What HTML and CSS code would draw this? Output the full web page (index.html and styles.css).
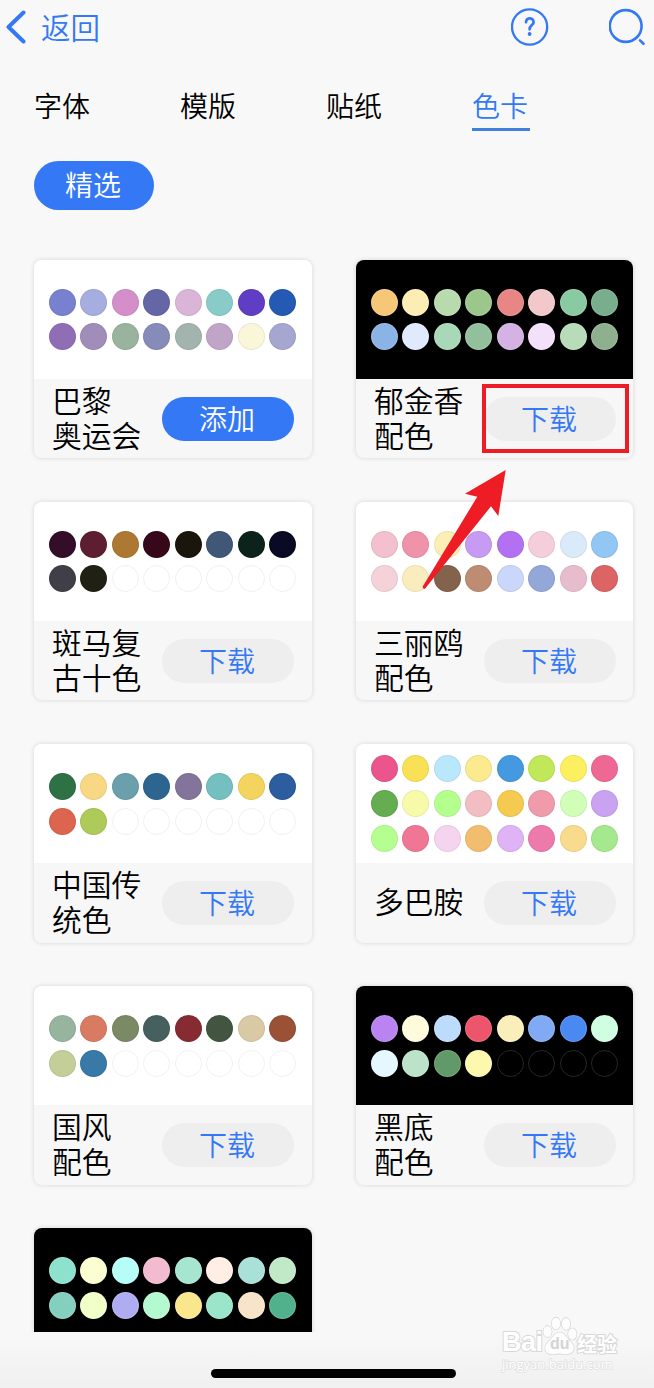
FILE: index.html
```html
<!DOCTYPE html>
<html lang="zh-CN">
<head>
    <meta charset="UTF-8">
    <meta name="viewport" content="width=device-width, initial-scale=1.0">
    <title>色卡</title>
    <link rel="stylesheet" href="styles.css">
</head>
<body>
    <div class="page">
        <header class="header">
            <a class="back">
                <svg width="20" height="34" viewBox="0 0 20 34"><path d="M17.5 2.5 L2.5 17 L17.5 31.5"/></svg>
                <span>返回</span>
            </a>
            <div class="actions">
                <svg width="38" height="38" viewBox="0 0 38 38">
                    <circle cx="18.6" cy="19" r="17.6" stroke-width="2.3"/>
                    <path stroke-width="2.7" d="M15 14.2 C15 9 22.6 9 22.6 14.2 C22.6 17 18.6 17.2 18.6 21.3"/>
                    <circle class="dot" cx="18.6" cy="26" r="1.9"/>
                </svg>
                <svg width="38" height="38" viewBox="0 0 38 38">
                    <circle cx="16.7" cy="18" r="15.9" stroke-width="2.6"/>
                    <path stroke-width="2.6" d="M31 32.4 L34.5 35.8"/>
                </svg>
            </div>
        </header>

        <nav class="tabs">
            <a class="tab">字体</a>
            <a class="tab">模版</a>
            <a class="tab">贴纸</a>
            <a class="tab active">色卡</a>
        </nav>

        <button class="filter">精选</button>

        <main class="list">
            <div class="grid" id="grid"></div>
        </main>

        <footer class="bottom">
            <div class="home-bar"></div>
        </footer>

        <div class="highlight"></div>
        <svg class="arrow" width="86" height="122" viewBox="0 0 86 122">
            <path d="M84.7 1 L44 24.7 L56.3 27.7 L1.7 117.5 Q1.6 120.5 4.2 119.5 L70 37.3 L77.3 47 Z"/>
        </svg>

        <div class="watermark">
            <div class="brand">
                <span class="bai">Bai</span>
                <span class="paw">
                    <svg width="36" height="40" viewBox="0 0 36 40">
                        <ellipse cx="6.5" cy="15.5" rx="4.2" ry="5.5"/>
                        <ellipse cx="15" cy="7.5" rx="4.3" ry="6"/>
                        <ellipse cx="25" cy="8" rx="4.3" ry="6"/>
                        <ellipse cx="31.3" cy="18" rx="4.2" ry="5.7"/>
                        <path d="M18.5 16.5 C22.5 16.5 24 19 27 23 C31 27 34 29 32.5 34 C30.5 39 25 38.5 18.5 37.5 C11 38.5 6 39 4.5 34 C3 29 7 26 10 23 C13 19 14.5 16.5 18.5 16.5 Z"/>
                    </svg>
                    <b>du</b>
                </span>
                <span class="jy">经验</span>
            </div>
            <div class="site">jingyan.baidu.com</div>
        </div>
    </div>

    <script>
        // empty: 末尾未填充的空圆数量
        const cards = [
            { name: '巴黎<br>奥运会', added: true, colors: '7881cf a6addf d48fcb 6566a5 dab5d8 88cbc9 5f3dc4 245ab4 8f6eb6 a08db9 98b49f 878bb9 a3b3ad c1a5c8 f9f6da a6a7d0' },
            { name: '郁金香<br>配色', dark: true, colors: 'f6c777 fcedb5 b8dbad 9bc78c e88585 f2c8ca 8acaa3 78ae8d 8bb4e6 e0eafc a9d8b8 92c09c d4b2e3 f3e1f9 b8dbb8 8fb08f' },
            { name: '斑马复<br>古十色', colors: '340d28 5e1e31 ad7832 37081a 1a160d 405777 0c231b 0b0a24 403f48 202114', empty: 6 },
            { name: '三丽鸥<br>配色', colors: 'f4c0d0 f092a9 fbefb5 c79bf3 b370f3 f5cedb dbeafa 92c6f4 f5d2da faedbd 83634b bd8c72 cad7fa 93a8d9 e7bdcd dc6465' },
            { name: '中国传<br>统色', colors: '2e7145 f8d884 6b9fac 2d6591 82749a 74bfc0 f2d45e 2b5d9f dd644e aeca58', empty: 6 },
            { name: '多巴胺', colors: 'eb558c f9e157 b9e8fc fbea8e 4499e0 c0e859 fcf060 ef6894 66ad51 f7fba9 b5ff8f f2bec3 f4cb50 f09bab d1ffb7 c9a3f2 b5ff91 ef7694 f5d4f0 f3bd70 deb4f6 ec7bac f8db8c a4e98e' },
            { name: '国风<br>配色', colors: '96b49e d97b62 7b8965 46605f 862b32 425541 d9caa5 9a5136 c4ce99 3979a7', empty: 6 },
            { name: '黑底<br>配色', dark: true, colors: 'b983f2 fdfbdc bddcfb ec556c faefbb 80aaf3 4a89f1 cffee0 e5f8ff bce3c9 629968 fdf8ad', empty: 4 },
            { dark: true, colors: '8ce2cd fafed1 b6fdf8 f2bbcf a6e5d0 ffeee4 a9e0d7 c1e9c7 84cfbd f1ffc8 b0acf2 b4fad1 fae68d 9be5cb f8e4c8 51b18d' }
        ];

        let html = '';
        for (const card of cards) {
            let dots = card.colors.split(' ').map(c => `<i class="swatch" style="background-color: #${c}"></i>`).join('');
            dots += '<i class="swatch"></i>'.repeat(card.empty || 0);
            let info = '';
            if (card.name) {
                info = `
                    <div class="info">
                        <div class="name">${card.name}</div>
                        <button class="btn ${card.added ? 'primary' : ''}">${card.added ? '添加' : '下载'}</button>
                    </div>`;
            }
            html += `
                <div class="card">
                    <div class="palette ${card.dark ? 'dark' : ''}"><div class="swatches">${dots}</div></div>
                    ${info}
                </div>`;
        }
        document.getElementById('grid').innerHTML = html;
    </script>
</body>
</html>
```
FILE: styles.css
```css
* {
    box-sizing: border-box;
}
body {
    margin: 0;
    background-color: #f8f8f8;
    color: #000;
    font-family: "Noto Sans CJK SC", sans-serif;
    font-weight: 350;
}
button {
    border: none;
    padding: 0;
    font-family: inherit;
    font-weight: inherit;
    cursor: pointer;
}
.page {
    position: relative;
    width: 654px;
    height: 1388px;
    overflow: hidden;
    display: flex;
    flex-direction: column;
}
.header {
    display: flex;
    justify-content: space-between;
    align-items: center;
    height: 54px;
    padding: 0 7px 0 6px;
}
.back {
    display: flex;
    align-items: center;
    gap: 15px;
    color: #3478f6;
    font-size: 29.5px;
    line-height: 40px;
}
.back span {
    padding-bottom: 3px;
}
.header svg {
    display: block;
    fill: none;
    stroke: #3478f6;
    stroke-linecap: round;
    stroke-linejoin: round;
}
.back svg {
    stroke-width: 4;
}
.header .dot {
    fill: #3478f6;
    stroke: none;
}
.actions {
    display: flex;
    gap: 60px;
}
.tabs {
    display: grid;
    grid-template-columns: repeat(4, 58px);
    column-gap: 88px;
    padding: 31px 0 0 34px;
    height: 77px;
}
.tab {
    height: 46px;
    font-size: 28px;
    line-height: 40px;
    white-space: nowrap;
}
.tab.active {
    color: #3478f6;
    border-bottom: 3px solid #3f7fde;
}
.filter {
    flex: none;
    width: 120px;
    height: 49px;
    margin: 30px 0 0 34px;
    padding: 0 2px 2px 0;
    border-radius: 25px;
    background-color: #3478f6;
    color: #fff;
    font-size: 28px;
    line-height: 47px;
}
.list {
    height: 1122px;
    padding: 50px 0 0 34px;
    overflow: hidden;
}
.grid {
    display: grid;
    grid-template-columns: 278px 277px;
    column-gap: 44px;
    row-gap: 43.7px;
}
.card {
    height: 198.4px;
    border-radius: 8px;
    overflow: hidden;
    background-color: #f7f7f7;
    box-shadow: 0 0 5px rgba(0, 0, 0, 0.14);
}
.palette {
    display: flex;
    align-items: center;
    height: 119px;
    padding-left: 14.6px;
    background-color: #fff;
}
.palette.dark {
    background-color: #000;
}
.swatches {
    display: grid;
    grid-template-columns: repeat(8, 27px);
    gap: 7.8px 4.55px;
}
.swatch {
    height: 27px;
    border: 1px solid rgba(0, 0, 0, 0.06);
    border-radius: 50%;
}
.dark .swatch {
    border-color: rgba(255, 255, 255, 0.15);
}
.info {
    display: flex;
    align-items: center;
    height: 79.4px;
    padding-left: 18px;
}
.name {
    width: 110px;
    padding-bottom: 4px;
    font-size: 29.8px;
    line-height: 35px;
    white-space: nowrap;
}
.btn {
    width: 132px;
    height: 44px;
    padding: 0 2px 2px 0;
    border-radius: 22px;
    background-color: #eee;
    color: #3478f6;
    font-size: 28px;
    line-height: 42px;
}
.btn.primary {
    background-color: #3478f6;
    color: #fff;
}
.bottom {
    flex: 1;
    padding: 37px 0 0 211px;
    background: linear-gradient(#f8f8f8, #f0f0f0);
}
.home-bar {
    width: 245px;
    height: 9px;
    border-radius: 5px;
    background-color: #000;
}
.highlight {
    position: absolute;
    left: 482px;
    top: 384px;
    width: 147px;
    height: 69px;
    border: 4px solid #ee1c25;
}
.arrow {
    position: absolute;
    left: 421px;
    top: 469px;
    fill: #ee1c25;
}
.watermark {
    position: absolute;
    left: 502px;
    top: 1316px;
    width: 120px;
    color: #fff;
    font-family: "Liberation Sans", "Noto Sans CJK SC", sans-serif;
    font-weight: bold;
    -webkit-text-stroke: 2px #d8d8d8;
    paint-order: stroke fill;
}
.brand {
    display: flex;
    align-items: flex-end;
    height: 40px;
}
.bai {
    width: 39px;
    font-size: 27px;
    line-height: 28px;
    letter-spacing: -0.5px;
}
.paw {
    position: relative;
    width: 36px;
    height: 40px;
}
.paw svg {
    display: block;
    fill: #fdfdfd;
    stroke: #d4d4d4;
    stroke-width: 1.3;
}
.paw b {
    position: absolute;
    left: 9px;
    top: 19px;
    color: #d4d4d4;
    font-size: 16px;
    line-height: 18px;
    -webkit-text-stroke: 0;
}
.jy {
    font-size: 20px;
    line-height: 22px;
    white-space: nowrap;
}
.site {
    font-family: "Open Sans", sans-serif;
    font-size: 13px;
    line-height: 16px;
    font-weight: normal;
    -webkit-text-stroke: 1.5px #e0e0e0;
}
```
